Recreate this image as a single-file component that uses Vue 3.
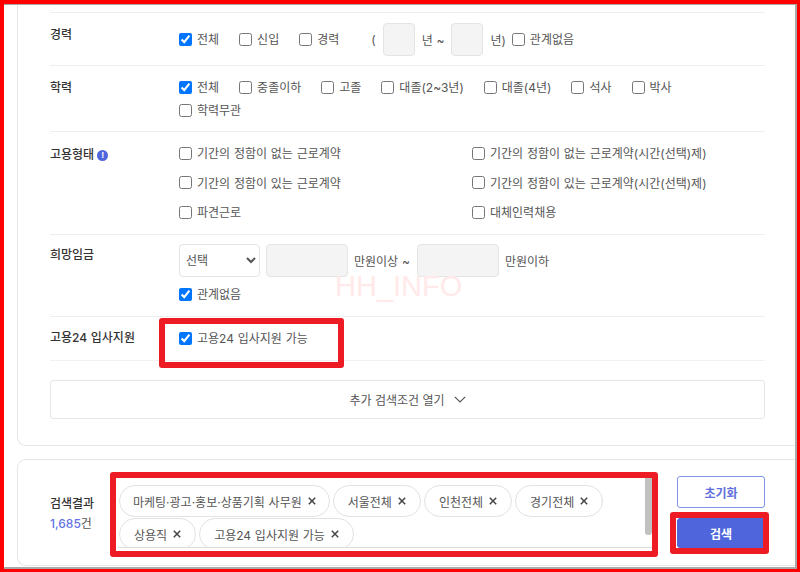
<script setup>
const eduOptions = [
  { label: '전체', checked: true }, { label: '중졸이하' }, { label: '고졸' }, { label: '대졸(2~3년)' },
  { label: '대졸(4년)' }, { label: '석사' }, { label: '박사' }, { label: '학력무관' }
]
const careerOptions = [{ label: '전체', checked: true }, { label: '신입' }, { label: '경력' }]
const employOptions = [
  '기간의 정함이 없는 근로계약', '기간의 정함이 없는 근로계약(시간(선택)제)',
  '기간의 정함이 있는 근로계약', '기간의 정함이 있는 근로계약(시간(선택)제)',
  '파견근로', '대체인력채용'
]
const tags = ['마케팅·광고·홍보·상품기획 사무원', '서울전체', '인천전체', '경기전체', '상용직', '고용24 입사지원 가능']
</script>

<template>
  <div class="frame">
    <div class="inner">
      <section class="card filters">
        <div class="row career">
          <div class="label">경력</div>
          <div class="controls line">
            <label v-for="o in careerOptions" :key="o.label" class="check">
              <input type="checkbox" :checked="o.checked" /><span>{{ o.label }}</span>
            </label>
            <div class="years">
              <span>(</span><input class="field year" type="text" /><span>년 ~</span><input class="field year" type="text" /><span>년)</span>
              <label class="check none"><input type="checkbox" /><span>관계없음</span></label>
            </div>
          </div>
        </div>
        <div class="row edu">
          <div class="label">학력</div>
          <div class="controls line wrap">
            <label v-for="o in eduOptions" :key="o.label" class="check">
              <input type="checkbox" :checked="o.checked" /><span>{{ o.label }}</span>
            </label>
          </div>
        </div>
        <div class="row employ">
          <div class="label">고용형태 <i class="info">!</i></div>
          <div class="controls grid2">
            <label v-for="o in employOptions" :key="o" class="check">
              <input type="checkbox" /><span>{{ o }}</span>
            </label>
          </div>
        </div>
        <div class="row pay">
          <div class="label">희망임금</div>
          <div class="controls">
            <div class="pay-line">
              <select class="pick"><option>선택</option></select>
              <input class="field money" type="text" />
              <span class="above">만원이상 ~</span>
              <input class="field money" type="text" />
              <span>만원이하</span>
            </div>
            <label class="check"><input type="checkbox" checked /><span>관계없음</span></label>
          </div>
        </div>
        <div class="row apply">
          <div class="label">고용24 입사지원</div>
          <div class="controls">
            <label class="check"><input type="checkbox" checked /><span>고용24 입사지원 가능</span></label>
          </div>
        </div>
        <button class="more" type="button">
          추가 검색조건 열기
          <svg width="12" height="7" viewBox="0 0 12 7"><path d="M.8.8 6 6 11.2.8" fill="none" stroke="#555" stroke-width="1.2" /></svg>
        </button>
      </section>

      <section class="card result">
        <div class="summary">
          <div class="summary-title">검색결과</div>
          <div class="count"><b>1,685</b>건</div>
        </div>
        <div class="tagbox">
          <span v-for="t in tags" :key="t" class="tag">{{ t }}
            <svg width="8" height="8" viewBox="0 0 8 8"><path d="M.8.8 7.2 7.2M7.2.8.8 7.2" stroke="#444" stroke-width="1.5" /></svg>
          </span>
          <i class="thumb"></i>
        </div>
        <div class="actions">
          <button class="reset" type="button">초기화</button>
          <button class="search" type="button">검색</button>
        </div>
      </section>
    </div>
    <div class="watermark">HH_INFO</div>
    <i class="mark mark-apply"></i>
    <i class="mark mark-tags"></i>
    <i class="mark mark-search"></i>
  </div>
</template>

<style>
html, body { margin: 0; background: #fff; }
</style>

<style scoped>
* { box-sizing: border-box; }
.frame {
  position: relative;
  width: 800px;
  height: 572px;
  overflow: hidden;
  border: solid #ff0000;
  border-width: 4px 3px 3px 4px;
  background: #fff;
  font-family: Inter, "Noto Sans CJK KR", sans-serif;
  font-size: 12px;
  word-spacing: 0.4px;
  color: #555;
}
.inner {
  height: 100%;
  border: solid #a9a9a9;
  border-width: 1px 2px 2px 0;
  padding: 0 0 0 13px;
  display: flex;
  flex-direction: column;
  gap: 13px;
}
.card {
  border: 1px solid #e6e6e6;
  border-right: 0;
  background: #fff;
}
.filters {
  height: 441px;
  border-top: 0;
  border-radius: 0 0 0 9px;
  padding: 7px 30px 0 32px;
}
.row {
  display: flex;
  border-top: 1px solid #eee;
}
.label {
  width: 129px;
  flex: none;
  color: #333;
  font-weight: 500;
  line-height: 18px;
  display: flex;
  align-items: center;
  gap: 3px;
  align-self: flex-start;
}
.career { height: 53px; }
.career .label { margin-top: 13px; }
.edu { height: 66px; }
.edu .label { margin-top: 13px; }
.employ { height: 103px; }
.employ .label { margin-top: 14px; }
.pay { height: 82px; }
.pay .label { margin-top: 11px; }
.apply { height: 45px; border-bottom: 1px solid #f1f1f1; }
.apply .label { margin-top: 12px; }
.info {
  width: 11px;
  height: 11px;
  border-radius: 50%;
  background: #4f65dc;
  color: #fff;
  font: bold 9px/11px "Liberation Sans", sans-serif;
  text-align: center;
}
.check {
  display: inline-flex;
  align-items: center;
  gap: 5px;
  height: 18px;
  line-height: 16px;
  white-space: nowrap;
}
.check span { padding-top: 2px; }
.check input {
  width: 13px;
  height: 13px;
  margin: 0;
  flex: none;
}
.line { display: flex; gap: 20px; }
.career .controls { align-items: center; height: 52px; }
.years { display: flex; align-items: center; gap: 7px; margin-left: 12px; }
.none { margin-left: -1px; }
.field {
  background: #f4f4f4;
  border: 1px solid #e4e4e4;
  border-radius: 4px;
  height: 33px;
  margin: 0;
  padding: 0;
}
.year { width: 32px; }
.wrap {
  flex-wrap: wrap;
  row-gap: 5px;
  column-gap: 20px;
  max-width: 530px;
  padding-top: 12px;
  align-content: flex-start;
}
.grid2 {
  display: grid;
  grid-template-columns: 293px 1fr;
  grid-auto-rows: 18px;
  row-gap: 11.5px;
  padding-top: 12px;
}
.pay-line {
  display: flex;
  align-items: center;
  gap: 6px;
  margin: 9px 0 8px;
}
.above { margin-right: 1px; }
.pick {
  width: 81px;
  height: 33px;
  background: #fff;
  border: 1px solid #e4e4e4;
  border-radius: 4px;
  padding-left: 2px;
  margin: 0;
  font: inherit;
  color: #555;
}
.money { width: 82px; }
.apply .controls { padding-top: 12px; }
.more {
  display: flex;
  align-items: center;
  justify-content: center;
  gap: 9px;
  width: 100%;
  height: 39px;
  margin-top: 19px;
  background: #fff;
  border: 1px solid #e6e6e6;
  border-radius: 3px;
  font: inherit;
  color: #555;
}
.result {
  height: 107px;
  border-radius: 9px 0 0 9px;
  padding: 18px 30px 0 32px;
  display: flex;
}
.summary { width: 68px; flex: none; padding-top: 16px; line-height: 20px; }
.summary-title { color: #333; font-weight: 500; }
.count b { color: #6272e4; font-weight: 500; }
.tagbox {
  position: relative;
  width: 534px;
  height: 70px;
  flex: none;
  overflow: hidden;
  border-bottom: 1px solid #ddd;
  padding: 7px 0 0 1px;
  display: flex;
  flex-wrap: wrap;
  gap: 1px 3px;
  align-content: flex-start;
}
.tag {
  display: inline-flex;
  align-items: center;
  gap: 6px;
  height: 32px;
  padding: 0 14px;
  border: 1px solid #e2e2e2;
  border-radius: 16px;
  white-space: nowrap;
}
.tag:first-child { padding: 0 13px; }
.thumb {
  position: absolute;
  top: 0;
  right: 0;
  width: 7px;
  height: 57px;
  background: #c1c1c1;
  border-radius: 0 0 3px 3px;
}
.actions {
  margin-left: 25px;
  width: 88px;
  flex: none;
  display: flex;
  flex-direction: column;
  gap: 10px;
  margin-top: -2px;
}
.actions button {
  height: 32px;
  border-radius: 3px;
  font: inherit;
  font-weight: 700;
  padding: 0;
}
.actions .search { height: 30px; }
.reset { background: #fff; border: 1px solid #8294ee; color: #5f6fdc; }
.search { background: #4f65dc; border: 1px solid #4f65dc; color: #fff; }
.watermark {
  position: absolute;
  left: 331px;
  top: 265px;
  font: 29px/34px "Liberation Sans", sans-serif;
  word-spacing: 0;
  color: #ffe9e9;
  pointer-events: none;
}
.mark {
  position: absolute;
  border: 6px solid #ed1c24;
  border-radius: 3px;
  pointer-events: none;
}
.mark-apply { left: 155px; top: 314px; width: 185px; height: 50px; }
.mark-tags { left: 106px; top: 468px; width: 548px; height: 85px; }
.mark-search { left: 666px; top: 508px; width: 99px; height: 42px; }
</style>
